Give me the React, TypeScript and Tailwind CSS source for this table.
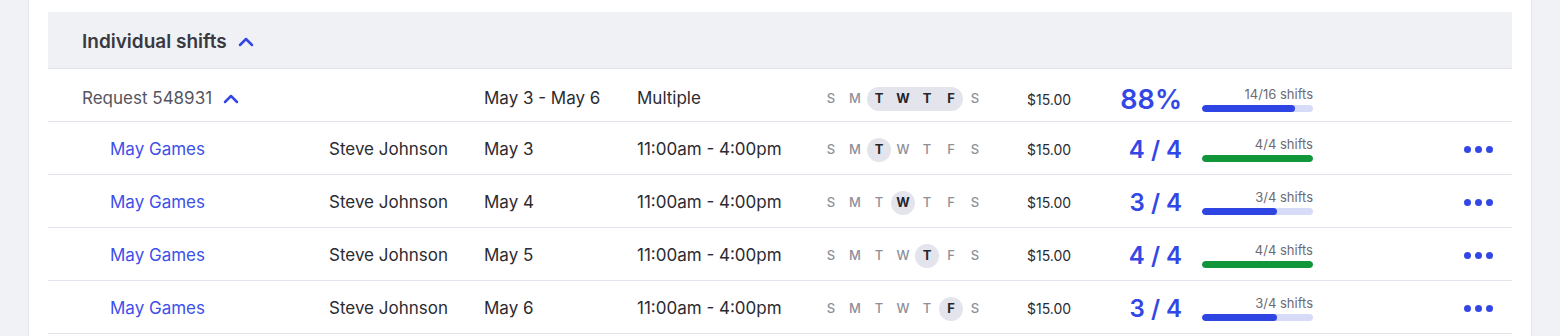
import { ChevronUp } from 'lucide-react'

const DAYS = ['S', 'M', 'T', 'W', 'T', 'F', 'S']

interface Shift {
  date: string
  day: number
  filled: number
  total: number
}

const shifts: Shift[] = [
  { date: 'May 3', day: 2, filled: 4, total: 4 },
  { date: 'May 4', day: 3, filled: 3, total: 4 },
  { date: 'May 5', day: 4, filled: 4, total: 4 },
  { date: 'May 6', day: 5, filled: 3, total: 4 },
]

function Day({ letter, active }: { letter: string; active?: boolean }) {
  return (
    <div
      className={`w-6 h-6 flex items-center justify-center text-[13px] ${
        active ? 'font-bold text-[#26262c]' : 'font-medium text-[#8f8f99]'
      }`}
    >
      {letter}
    </div>
  )
}

// request row: consecutive days share one pill
function DayRange({ from, to }: { from: number; to: number }) {
  return (
    <div className="flex items-center">
      {DAYS.slice(0, from).map((d, i) => <Day key={i} letter={d} />)}
      <div className="flex items-center rounded-full bg-[#e3e4ec]">
        {DAYS.slice(from, to + 1).map((d, i) => <Day key={i} letter={d} active />)}
      </div>
      {DAYS.slice(to + 1).map((d, i) => <Day key={i} letter={d} />)}
    </div>
  )
}

function DaySingle({ day }: { day: number }) {
  return (
    <div className="flex items-center">
      {DAYS.map((d, i) => (
        <div key={i} className={i === day ? 'rounded-full bg-[#e3e4ec]' : ''}>
          <Day letter={d} active={i === day} />
        </div>
      ))}
    </div>
  )
}

function Progress({ label, fill, color }: { label: string; fill: number; color: string }) {
  return (
    <div className="w-[111px] flex flex-col">
      <div className="text-right text-[13px] leading-[15px] text-[#6b6b75] mb-[3px]">{label}</div>
      <div className="h-[7px] rounded-full bg-[#d7dbf8] overflow-hidden">
        <div className={`h-full rounded-full ${color}`} style={{ width: fill }} />
      </div>
    </div>
  )
}

function Dots() {
  return (
    <div className="flex items-center gap-[4px]">
      <div className="w-[7px] h-[7px] rounded-full bg-[#3347e6]" />
      <div className="w-[7px] h-[7px] rounded-full bg-[#3347e6]" />
      <div className="w-[7px] h-[7px] rounded-full bg-[#3347e6]" />
    </div>
  )
}

export default function App() {
  return (
    <div className="bg-[#f1f2f6] min-h-screen px-[28px] font-['Inter',sans-serif]">
      <div className="bg-white border-x border-[#e6e7ee] px-[19px] pt-[12px] pb-10">
        {/* Section header */}
        <div className="h-[57px] pt-[4px] bg-[#f0f1f5] border-b border-[#e3e4ec] pl-[34px] flex items-center gap-[7px]">
          <span className="text-[19px] font-semibold text-[#393942]">Individual shifts</span>
          <ChevronUp size={24} strokeWidth={2.5} className="text-[#3347e6]" />
        </div>

        {/* Request summary */}
        <div className="h-[53px] pt-[8px] border-b border-[#e3e3ee] flex items-center text-[17px] text-[#2b2b31]">
          <div className="w-[436px] pl-[34px] flex items-center gap-[7px] text-[#55555f]">
            <span>Request 548931</span>
            <ChevronUp size={24} strokeWidth={2.5} className="text-[#3347e6]" />
          </div>
          <div className="w-[153px]">May 3 - May 6</div>
          <div className="w-[182px]">Multiple</div>
          <div className="w-[208px]">
            <DayRange from={2} to={5} />
          </div>
          <div className="w-[73px] text-[14px]">$15.00</div>
          <div className="w-[82px] text-right text-[27px] font-semibold text-[#3347e6] leading-none">88%</div>
          <div className="ml-[20px]">
            <Progress label="14/16 shifts" fill={93} color="bg-[#2f45e3]" />
          </div>
        </div>

        {shifts.map(s => {
          const full = s.filled === s.total
          return (
            <div key={s.date} className="h-[53px] pt-[3px] border-b border-[#e3e3ee] flex items-center text-[17px] text-[#2b2b31]">
              <div className="w-[281px] pl-[62px] text-[#3d50ea]">May Games</div>
              <div className="w-[155px]">Steve Johnson</div>
              <div className="w-[153px]">{s.date}</div>
              <div className="w-[182px]">11:00am - 4:00pm</div>
              <div className="w-[208px]">
                <DaySingle day={s.day} />
              </div>
              <div className="w-[73px] text-[14px]">$15.00</div>
              <div className="w-[82px] text-right text-[24px] font-semibold text-[#3347e6] leading-none">
                {s.filled} / {s.total}
              </div>
              <div className="ml-[20px]">
                <Progress
                  label={`${s.filled}/${s.total} shifts`}
                  fill={full ? 111 : 75}
                  color={full ? 'bg-[#12963a]' : 'bg-[#2f45e3]'}
                />
              </div>
              <div className="flex-1 flex justify-end pr-[19px]">
                <Dots />
              </div>
            </div>
          )
        })}
      </div>
    </div>
  )
}
